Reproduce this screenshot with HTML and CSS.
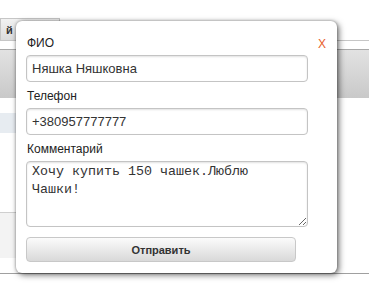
FILE: index.html
```
<!DOCTYPE html>
<html lang="ru">
<head>
<meta charset="utf-8"/>
<title>Заказ</title>
<link rel="stylesheet" href="styles.css">
</head>
<body>
<div class="page">
  <div class="tabbar">
    <div class="tab">й</div>
  </div>
  <div class="gridhead"></div>
  <div class="row-sel"></div>
  <div class="row-foot"></div>
  <div class="bottom-line"></div>
</div>

<div class="dialog">
  <span class="close">X</span>
  <div class="label">ФИО</div>
  <input class="field" type="text" value="Няшка Няшковна">
  <div class="label">Телефон</div>
  <input class="field" type="text" value="+380957777777">
  <div class="label">Комментарий</div>
  <textarea class="comment">Хочу купить 150 чашек.Люблю Чашки!</textarea>
  <button class="send">Отправить</button>
</div>
</body>
</html>
```

FILE: styles.css
```
body {
  margin: 0;
  font-family: Arial, 'Liberation Sans', sans-serif;
  background: #fff;
  width: 369px;
  height: 294px;
  overflow: hidden;
}
.page {
  padding-top: 18px;
}
.tabbar {
  height: 22px;
  border-bottom: 1px solid #c6c6c6;
}
.tab {
  width: 60px;
  height: 22px;
  box-sizing: border-box;
  background: linear-gradient(#f2f2f2, #dcdcdc);
  border: 1px solid #c6c6c6;
  border-bottom: none;
  font-size: 11px;
  font-weight: bold;
  color: #333;
  padding: 5px 0 0 5px;
}
.gridhead {
  margin-top: 8px;
  height: 48px;
  border-top: 1px solid #a8a8a8;
  background: linear-gradient(#e2e2e2, #c9c9c9);
}
.row-sel {
  margin-top: 15px;
  width: 40px;
  height: 20px;
  background: #e7ecf1;
}
.row-foot {
  margin-top: 79px;
  width: 40px;
  height: 45px;
  border-top: 1px solid #cfcfcf;
  background: #f3f3f3;
}
.bottom-line {
  margin-top: 15px;
  height: 1px;
  background: #a0a0a0;
}

.dialog {
  position: absolute;
  left: 16px;
  top: 21px;
  width: 321px;
  height: 252px;
  box-sizing: border-box;
  padding: 15px 29px 0 10px;
  background: #fff;
  border-radius: 6px;
  box-shadow: 2px 2px 6px rgba(0,0,0,0.55), 0 0 3px rgba(0,0,0,0.35);
  display: flex;
  flex-direction: column;
}
.close {
  position: absolute;
  right: 11px;
  top: 16px;
  font-size: 12px;
  color: #e8602c;
}
.label {
  font-size: 12px;
  line-height: 14px;
  color: #222;
  padding-left: 1px;
  margin-bottom: 5px;
}
.field {
  height: 27px;
  box-sizing: border-box;
  margin: 0 0 7px 0;
  padding: 0 5px;
  border: 1px solid #c4c4c4;
  border-radius: 4px;
  box-shadow: inset 0 1px 2px rgba(0,0,0,0.12);
  font-family: Arial, 'Liberation Sans', sans-serif;
  font-size: 13px;
  color: #333;
}
.comment {
  height: 66px;
  box-sizing: border-box;
  margin: 0 0 10px 0;
  padding: 1px 5px;
  border: 1px solid #c4c4c4;
  border-radius: 4px;
  box-shadow: inset 0 1px 2px rgba(0,0,0,0.12);
  font-family: 'Liberation Mono', 'Courier New', monospace;
  font-size: 13.33px;
  line-height: 18px;
  color: #333;
}
.send {
  width: 270px;
  height: 25px;
  border: 1px solid #c8c8c8;
  border-radius: 4px;
  background: linear-gradient(#fbfbfb, #d9d9d9);
  font-family: Arial, 'Liberation Sans', sans-serif;
  font-size: 11px;
  font-weight: bold;
  color: #333;
}
```
